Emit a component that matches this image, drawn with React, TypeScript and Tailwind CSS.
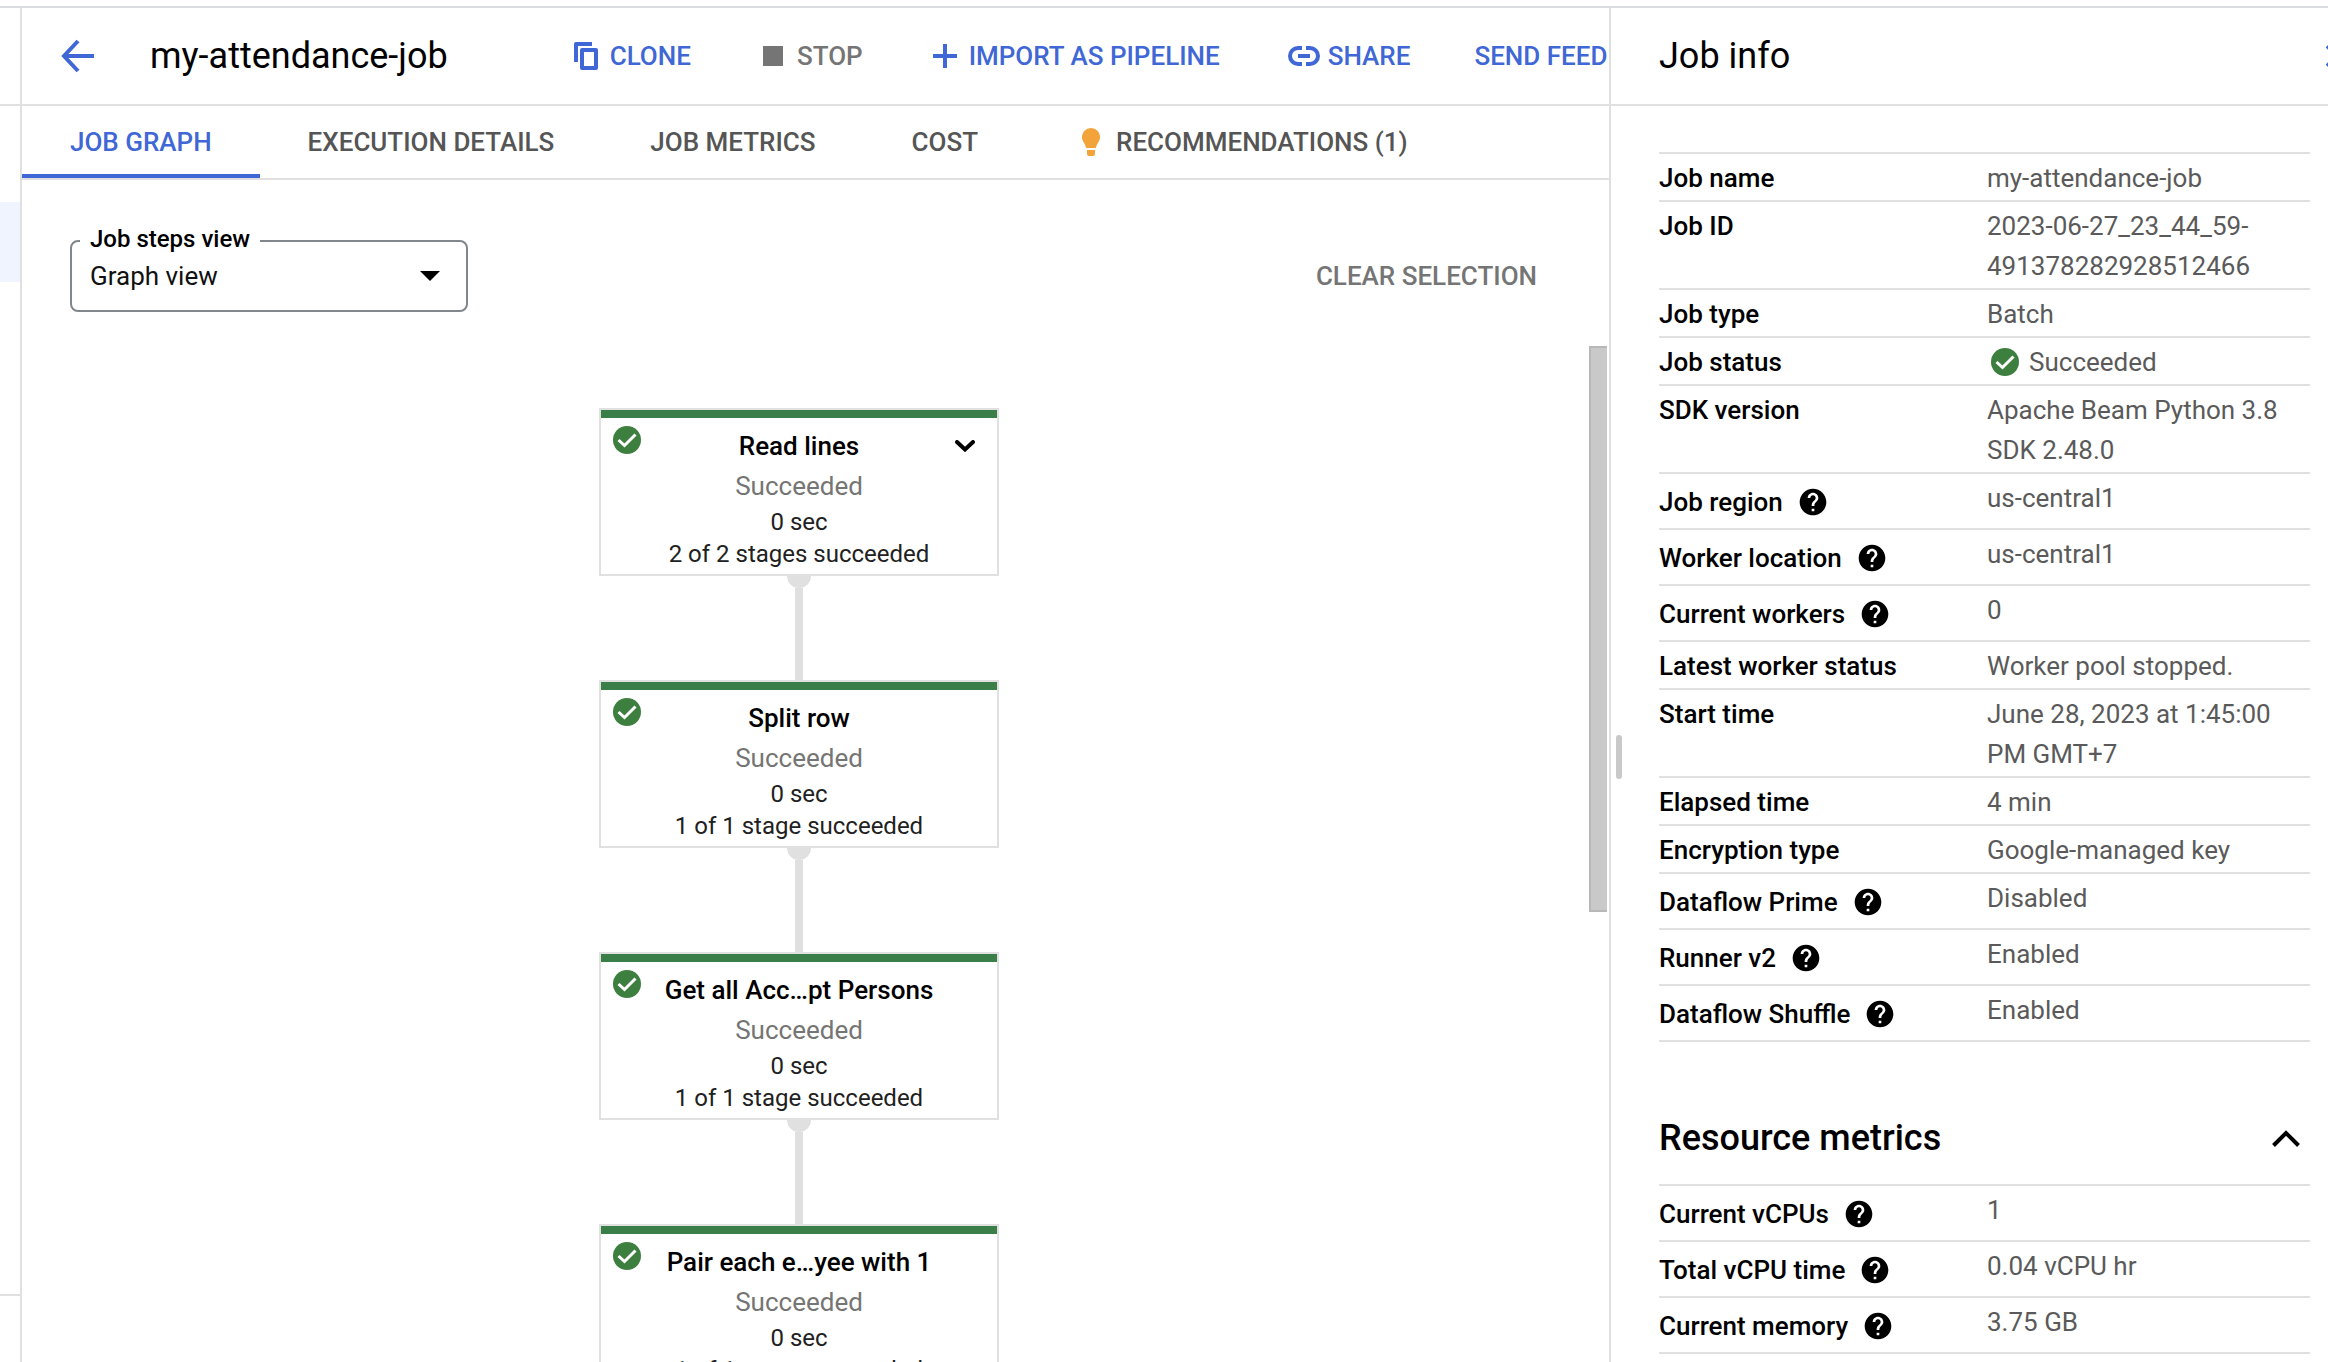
import type { ReactNode } from "react";
import { MdHelp } from "react-icons/md";

function Divider() {
  return <div className="h-0.5 w-full shrink-0 bg-[#e0e0e0]" />;
}

function LeftRail() {
  return (
    <aside className="flex w-[22px] shrink-0 flex-col border-r-2 border-[#e0e0e0]">
      <div className="h-24" />
      <Divider />
      <div className="mt-24 h-20 bg-[#f0f4fe]" />
      <div className="mt-auto" />
      <Divider />
      <div className="h-[66px]" />
    </aside>
  );
}

function CopyIcon() {
  return (
    <svg viewBox="0 0 24 28" className="mr-3 h-7 w-6" fill="none" stroke="currentColor" strokeWidth="4" strokeLinejoin="round">
      <path d="M18 2H2V20" />
      <path d="M8 8H22V26H8z" />
    </svg>
  );
}

function PlusIcon() {
  return (
    <svg viewBox="0 0 24 24" className="mr-3 size-6" fill="none" stroke="currentColor" strokeWidth="4">
      <path d="M12 0V24M0 12H24" />
    </svg>
  );
}

function LinkIcon() {
  return (
    <svg viewBox="0 0 32 20" className="mr-2 h-5 w-8" fill="none" stroke="currentColor" strokeWidth="4">
      <path d="M14 2H10A8 8 0 0 0 10 18H14M18 2H22A8 8 0 0 1 22 18H18M10 10H22" />
    </svg>
  );
}

function Action({ icon, children, muted, margin }: { icon?: ReactNode; children: ReactNode; muted?: boolean; margin: string }) {
  return (
    <button
      className={`${margin} flex shrink-0 items-center whitespace-nowrap text-[26px] leading-10 font-medium ${
        muted ? "text-[#757575]" : "text-[#3f67d6]"
      }`}
    >
      {icon}
      {children}
    </button>
  );
}

function Header() {
  return (
    <header className="flex h-24 shrink-0 items-center overflow-hidden">
      <a href="#jobs" aria-label="Back to jobs" className="ml-9 text-[#3f67d6]">
        <svg viewBox="0 0 40 40" className="size-10" fill="none" stroke="currentColor" strokeWidth="4">
          <path d="M36 20H7M20 5L6 20L20 35" />
        </svg>
      </a>
      <h1 className="ml-[52px] text-[36px] leading-10 whitespace-nowrap text-black">my-attendance-job</h1>
      <Action margin="ml-[126px]" icon={<CopyIcon />}>CLONE</Action>
      <Action margin="ml-[72px]" muted icon={<span className="mr-3.5 size-5 bg-[#757575]" />}>STOP</Action>
      <Action margin="ml-[70px]" icon={<PlusIcon />}>IMPORT AS PIPELINE</Action>
      <Action margin="ml-[68px]" icon={<LinkIcon />}>SHARE</Action>
      <Action margin="ml-16">SEND FEEDBACK</Action>
    </header>
  );
}

function Bulb() {
  return (
    <svg viewBox="0 0 18 28" className="mr-4 h-7 w-[18px]" fill="#f2a33a">
      <path d="M9 0a9 9 0 0 0-9 9.500c0 4 3.500 6 4 10.500h10c.5-4.500 4-6.500 4-10.500a9 9 0 0 0-9-9.500zM5 22h8v4a2 2 0 0 1-2 2H7a2 2 0 0 1-2-2z" />
    </svg>
  );
}

function Tabs() {
  const tab = "flex h-[72px] items-center whitespace-nowrap px-12 text-[26px] font-medium text-[#555]";
  return (
    <nav role="tablist" className="flex shrink-0 border-b-2 border-[#e0e0e0]">
      <button role="tab" aria-selected="true" className="h-[72px] border-b-4 border-[#3f67d6] px-12 pt-1 text-[26px] font-medium whitespace-nowrap text-[#3f67d6]">
        JOB GRAPH
      </button>
      <button role="tab" aria-selected="false" className={tab}>EXECUTION DETAILS</button>
      <button role="tab" aria-selected="false" className={tab}>JOB METRICS</button>
      <button role="tab" aria-selected="false" className={tab}>COST</button>
      <button role="tab" aria-selected="false" className={`${tab} ml-2`}>
        <Bulb />
        RECOMMENDATIONS (1)
      </button>
    </nav>
  );
}

function StepsToolbar() {
  return (
    <div className="flex shrink-0 items-center justify-between pt-[60px] pr-[72px] pl-12">
      <div className="relative w-[398px]">
        <label htmlFor="steps-view" className="absolute -top-[19px] left-2.5 bg-white px-2.5 text-2xl leading-9 font-medium text-black">
          Job steps view
        </label>
        <select
          id="steps-view"
          className="h-[72px] w-full appearance-none rounded-lg border-2 border-[#80868b] bg-white pl-[18px] text-[26px] text-[#111]"
        >
          <option>Graph view</option>
        </select>
        <svg viewBox="0 0 20 10" className="pointer-events-none absolute top-[31px] right-7 h-2.5 w-5">
          <path d="M0 0h20L10 10z" />
        </svg>
      </div>
      <button className="text-[26px] leading-10 font-medium text-[#757575]">CLEAR SELECTION</button>
    </div>
  );
}

const STEPS = [
  { name: "Read lines", stages: "2 of 2 stages succeeded", expandable: true },
  { name: "Split row", stages: "1 of 1 stage succeeded" },
  { name: "Get all Acc…pt Persons", stages: "1 of 1 stage succeeded" },
  { name: "Pair each e…yee with 1", stages: "1 of 1 stage succeeded" },
];

function StatusCheck() {
  return (
    <svg viewBox="0 0 28 28" className="size-7 shrink-0">
      <circle cx="14" cy="14" r="14" fill="#3c7f3f" />
      <path d="M5.500 14L11.500 19.500L22.500 8.500" fill="none" stroke="#fff" strokeWidth="3" />
    </svg>
  );
}

function Step({ name, stages, expandable }: { name: string; stages: string; expandable?: boolean }) {
  return (
    <article className="relative flex h-[168px] w-[400px] shrink-0 flex-col items-center border-2 border-[#e0e0e0] bg-white">
      <div className="h-2 w-full shrink-0 bg-[#3a7f48]" />
      <div className="absolute top-4 left-3">
        <StatusCheck />
      </div>
      <h2 className="mt-2 text-[26px] leading-10 font-medium text-black">{name}</h2>
      {expandable && (
        <button aria-label="Expand step" className="absolute top-7 right-5 p-0.5">
          <svg viewBox="0 0 20 12" className="h-3 w-5" fill="none" stroke="#000" strokeWidth="4" strokeLinecap="round">
            <path d="M2 2L10 9.500L18 2" />
          </svg>
        </button>
      )}
      <p className="text-[26px] leading-10 text-[#757575]">Succeeded</p>
      <p className="text-2xl leading-8 text-[#212121]">0 sec</p>
      <p className="text-2xl leading-8 text-[#212121]">{stages}</p>
    </article>
  );
}

function Graph() {
  return (
    <div className="mt-[34px] flex min-h-0 flex-1 items-start pr-0.5">
      <div className="flex h-full min-w-0 flex-1 flex-col items-center overflow-hidden pt-[62px] pr-[13px]">
        {STEPS.map((step, i) => (
          <div key={step.name} className="flex shrink-0 flex-col items-center">
            {i > 0 && (
              <>
                <div className="h-3 w-6 rounded-b-full bg-[#e0e0e0]" />
                <div className="h-[92px] w-2 bg-[#e0e0e0]" />
              </>
            )}
            <Step {...step} />
          </div>
        ))}
      </div>
      <div className="h-[566px] w-[18px] shrink-0 border-y-2 border-l-2 border-[#b8b8b8] bg-[#c9c9c9]" />
    </div>
  );
}

type Info = { label: string; value: ReactNode; help?: boolean };

const JOB: Info[] = [
  { label: "Job name", value: "my-attendance-job" },
  { label: "Job ID", value: "2023-06-27_23_44_59-491378282928512466" },
  { label: "Job type", value: "Batch" },
  {
    label: "Job status",
    value: (
      <span className="flex items-center gap-2.5 pl-1">
        <StatusCheck />
        Succeeded
      </span>
    ),
  },
  { label: "SDK version", value: "Apache Beam Python 3.8 SDK 2.48.0" },
  { label: "Job region", value: "us-central1", help: true },
  { label: "Worker location", value: "us-central1", help: true },
  { label: "Current workers", value: "0", help: true },
  { label: "Latest worker status", value: "Worker pool stopped." },
  { label: "Start time", value: "June 28, 2023 at 1:45:00 PM GMT+7" },
  { label: "Elapsed time", value: "4 min" },
  { label: "Encryption type", value: "Google-managed key" },
  { label: "Dataflow Prime", value: "Disabled", help: true },
  { label: "Runner v2", value: "Enabled", help: true },
  { label: "Dataflow Shuffle", value: "Enabled", help: true },
];

const METRICS: Info[] = [
  { label: "Current vCPUs", value: "1", help: true },
  { label: "Total vCPU time", value: "0.04 vCPU hr", help: true },
  { label: "Current memory", value: "3.75 GB", help: true },
];

function InfoTable({ rows }: { rows: Info[] }) {
  return (
    <table className="w-full table-fixed border-separate border-spacing-0 border-b-2 border-[#e0e0e0]">
      <tbody className="text-[26px] leading-10">
        {rows.map((row) => (
          <tr key={row.label}>
            <th scope="row" className="w-[328px] border-t-2 border-[#e0e0e0] pt-1 pb-0.5 text-left align-top font-medium whitespace-nowrap text-black">
              {row.help ? (
                <span className="flex h-12 items-center gap-4">
                  {row.label}
                  <button aria-label={`About ${row.label}`}>
                    <MdHelp className="-m-0.5 size-8" />
                  </button>
                </span>
              ) : (
                row.label
              )}
            </th>
            <td className="border-t-2 border-[#e0e0e0] pt-1 pb-0.5 align-top break-words text-[#5a5a5a]">{row.value}</td>
          </tr>
        ))}
      </tbody>
    </table>
  );
}

function InfoPanel() {
  return (
    <aside className="flex w-[719px] shrink-0 flex-col border-l-2 border-[#e0e0e0]">
      <div className="flex h-24 shrink-0 items-center justify-between overflow-hidden pl-12">
        <h2 className="text-[36px] leading-10 text-black">Job info</h2>
        <button aria-label="Close panel" className="-mr-7 text-[#3f67d6]">
          <svg viewBox="0 0 30 24" className="h-6 w-[30px]" fill="none" stroke="currentColor" strokeWidth="4">
            <path d="M1 2L11 12L1 22M29 2L19 12L29 22" />
          </svg>
        </button>
      </div>
      <Divider />
      <div className="relative min-h-0 flex-1 overflow-hidden pt-[46px] pr-[18px] pl-12">
        <div className="absolute top-[629px] left-[5px] h-11 w-1.5 rounded-full bg-[#c9c9c9]" />
        <InfoTable rows={JOB} />
        <div className="flex h-[142px] items-center justify-between pt-[50px] pr-2.5">
          <h2 className="text-[36px] leading-10 font-medium text-black">Resource metrics</h2>
          <button aria-label="Collapse resource metrics">
            <svg viewBox="0 0 28 17" className="h-[17px] w-7" fill="none" stroke="#000" strokeWidth="4">
              <path d="M1.500 15.500L14 3L26.500 15.500" />
            </svg>
          </button>
        </div>
        <InfoTable rows={METRICS} />
      </div>
    </aside>
  );
}

export default function App() {
  return (
    <div className="flex h-screen w-full flex-col overflow-hidden bg-white font-['Roboto',sans-serif]">
      <div className="h-1.5 shrink-0" />
      <div className="h-0.5 w-full shrink-0 bg-[#dadce0]" />
      <div className="flex min-h-0 flex-1">
        <LeftRail />
        <main className="flex min-w-0 flex-1 flex-col">
          <Header />
          <Divider />
          <Tabs />
          <StepsToolbar />
          <Graph />
        </main>
        <InfoPanel />
      </div>
    </div>
  );
}
